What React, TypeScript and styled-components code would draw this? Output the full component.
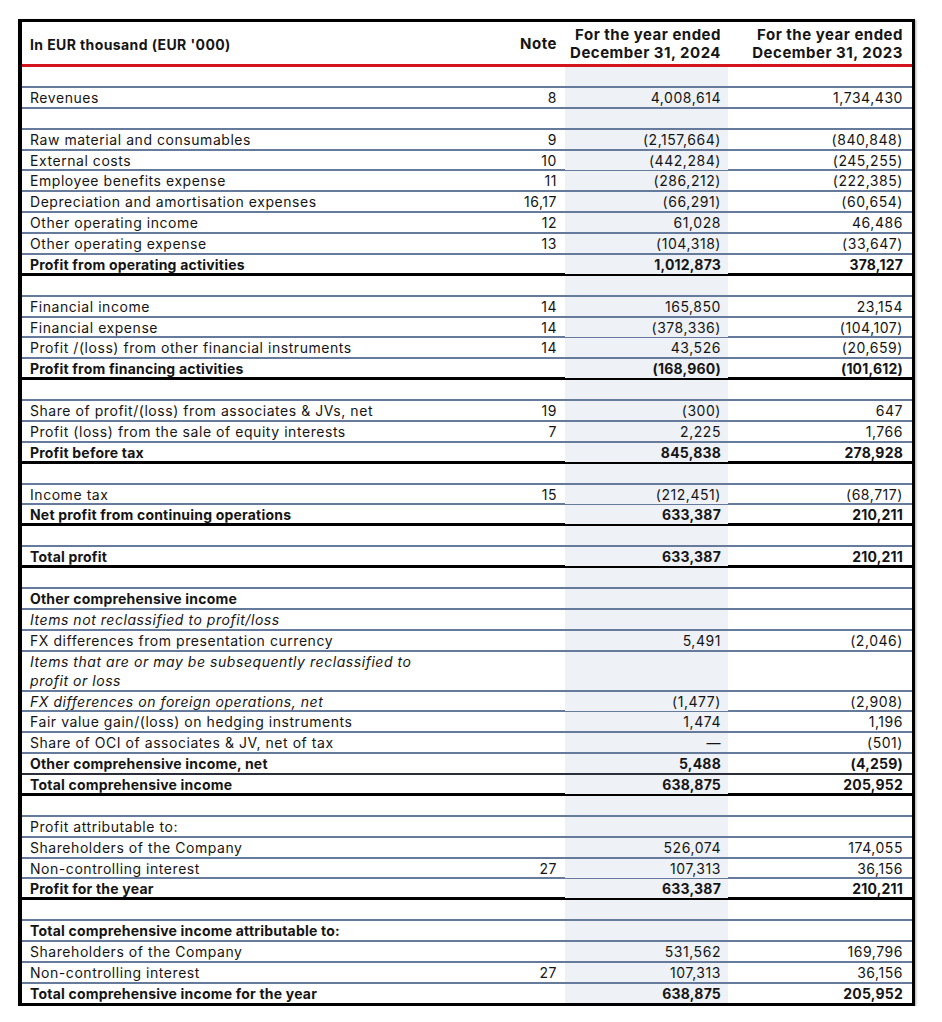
import React from "react";
import styled, { createGlobalStyle, css } from "styled-components";

const Global = createGlobalStyle`
  html, body { margin: 0; padding: 0; background: #ffffff; }
  body { font-family: Inter, "Noto Sans", Arial, sans-serif; color: #151515; }
`;

const ROW_H = 20.88;

type Rule = "thin" | "thick" | "dark" | "none";

interface RowData {
  label?: React.ReactNode;
  note?: string;
  a?: string;
  b?: string;
  bold?: boolean;
  labelBold?: boolean;
  italic?: boolean;
  rule?: Rule;
  tall?: boolean;
}

const Frame = styled.div`
  margin: 19px 0 0 18px;
  width: 890px;
  border: 3px solid #000;
  border-left-width: 4px;
  box-shadow: 1px 1px 2px rgba(0, 0, 0, 0.35);
`;

const Grid = css`
  display: grid;
  grid-template-columns: 496px 47px 163px 184px;
`;

const HeaderRow = styled.div`
  ${Grid};
  align-items: center;
  height: 45px;
  box-sizing: border-box;
  padding-top: 2px;
  border-bottom: 3px solid #d4141c;
  font-weight: 700;
`;

const HeadLabel = styled.div`
  padding-left: 8px;
  padding-top: 1px;
  font-size: 14px;
  letter-spacing: 0.4px;
`;

const HeadNum = styled.div<{ $pr: number }>`
  text-align: right;
  padding-right: ${(p) => p.$pr}px;
  line-height: 18px;
  font-size: 15px;
  letter-spacing: 0.5px;
  white-space: nowrap;
`;

const ruleStyle: Record<Rule, string> = {
  thin: "2px solid #667a9c",
  thick: "3px solid #000",
  dark: "2px solid #2a2f3a",
  none: "none",
};

const BodyRow = styled.div<{ $rule: Rule; $tall?: boolean; $bold?: boolean }>`
  ${Grid};
  height: ${(p) => (p.$tall ? 40 : p.$rule === "none" ? ROW_H - 2 : ROW_H)}px;
  box-sizing: border-box;
  border-bottom: ${(p) => ruleStyle[p.$rule]};
  font-size: 14px;
  font-weight: ${(p) => (p.$bold ? 700 : 400)};
  letter-spacing: ${(p) => (p.$bold ? 0.2 : 0.55)}px;
`;

const Cell = styled.div`
  display: flex;
  align-items: center;
  min-width: 0;
  white-space: nowrap;
`;

const LabelCell = styled(Cell)<{ $italic?: boolean; $bold?: boolean }>`
  padding-left: 8px;
  font-style: ${(p) => (p.$italic ? "italic" : "normal")};
  font-weight: ${(p) => (p.$bold ? 700 : "inherit")};
  letter-spacing: ${(p) => (p.$bold ? "0.2px" : "inherit")};
  line-height: 19px;
  white-space: normal;
`;

const NumCell = styled(Cell)<{ $pr: number; $shade?: boolean }>`
  justify-content: flex-end;
  padding-right: ${(p) => p.$pr}px;
  background: ${(p) => (p.$shade ? "#eef1f5" : "transparent")};
`;

const B: RowData = { rule: "thin" };

const rows: RowData[] = [
  B,
  { label: "Revenues", note: "8", a: "4,008,614", b: "1,734,430" },
  B,
  { label: "Raw material and consumables", note: "9", a: "(2,157,664)", b: "(840,848)" },
  { label: "External costs", note: "10", a: "(442,284)", b: "(245,255)" },
  { label: "Employee benefits expense", note: "11", a: "(286,212)", b: "(222,385)" },
  { label: "Depreciation and amortisation expenses", note: "16,17", a: "(66,291)", b: "(60,654)" },
  { label: "Other operating income", note: "12", a: "61,028", b: "46,486" },
  { label: "Other operating expense", note: "13", a: "(104,318)", b: "(33,647)" },
  { label: "Profit from operating activities", a: "1,012,873", b: "378,127", bold: true, rule: "thick" },
  B,
  { label: "Financial income", note: "14", a: "165,850", b: "23,154" },
  { label: "Financial expense", note: "14", a: "(378,336)", b: "(104,107)" },
  { label: "Profit /(loss) from other financial instruments", note: "14", a: "43,526", b: "(20,659)" },
  { label: "Profit from financing activities", a: "(168,960)", b: "(101,612)", bold: true, rule: "thick" },
  B,
  { label: "Share of profit/(loss) from associates & JVs, net", note: "19", a: "(300)", b: "647" },
  { label: "Profit (loss) from the sale of equity interests", note: "7", a: "2,225", b: "1,766" },
  { label: "Profit before tax", a: "845,838", b: "278,928", bold: true, rule: "thick" },
  B,
  { label: "Income tax", note: "15", a: "(212,451)", b: "(68,717)" },
  { label: "Net profit from continuing operations", a: "633,387", b: "210,211", bold: true, rule: "thick" },
  B,
  { label: "Total profit", a: "633,387", b: "210,211", bold: true, rule: "thick" },
  B,
  { label: "Other comprehensive income", labelBold: true },
  { label: "Items not reclassified to profit/loss", italic: true },
  { label: "FX differences from presentation currency", a: "5,491", b: "(2,046)" },
  {
    label: (
      <>
        Items that are or may be subsequently reclassified to
        <br />
        profit or loss
      </>
    ),
    italic: true,
    tall: true,
  },
  { label: "FX differences on foreign operations, net", italic: true, a: "(1,477)", b: "(2,908)" },
  { label: "Fair value gain/(loss) on hedging instruments", a: "1,474", b: "1,196" },
  { label: "Share of OCI of associates & JV, net of tax", a: "—", b: "(501)" },
  { label: "Other comprehensive income, net", a: "5,488", b: "(4,259)", bold: true, rule: "dark" },
  { label: "Total comprehensive income", a: "638,875", b: "205,952", bold: true, rule: "thick" },
  B,
  { label: "Profit attributable to:" },
  { label: "Shareholders of the Company", a: "526,074", b: "174,055" },
  { label: "Non-controlling interest", note: "27", a: "107,313", b: "36,156" },
  { label: "Profit for the year", a: "633,387", b: "210,211", bold: true, rule: "thick" },
  B,
  { label: "Total comprehensive income attributable to:", labelBold: true },
  { label: "Shareholders of the Company", a: "531,562", b: "169,796" },
  { label: "Non-controlling interest", note: "27", a: "107,313", b: "36,156" },
  { label: "Total comprehensive income for the year", a: "638,875", b: "205,952", bold: true, rule: "none" },
];

export default function App() {
  return (
    <>
      <Global />
      <Frame>
        <HeaderRow>
          <HeadLabel>In EUR thousand (EUR '000)</HeadLabel>
          <HeadNum $pr={8}>Note</HeadNum>
          <HeadNum $pr={7}>
            For the year ended
            <br />
            December 31, 2024
          </HeadNum>
          <HeadNum $pr={9}>
            For the year ended
            <br />
            December 31, 2023
          </HeadNum>
        </HeaderRow>
        {rows.map((r, i) => (
          <BodyRow key={i} $rule={r.rule ?? "thin"} $tall={r.tall} $bold={r.bold}>
            <LabelCell $italic={r.italic} $bold={r.labelBold}>
              {r.label}
            </LabelCell>
            <NumCell $pr={8}>{r.note}</NumCell>
            <NumCell $pr={7} $shade>
              {r.a}
            </NumCell>
            <NumCell $pr={9}>{r.b}</NumCell>
          </BodyRow>
        ))}
      </Frame>
    </>
  );
}
